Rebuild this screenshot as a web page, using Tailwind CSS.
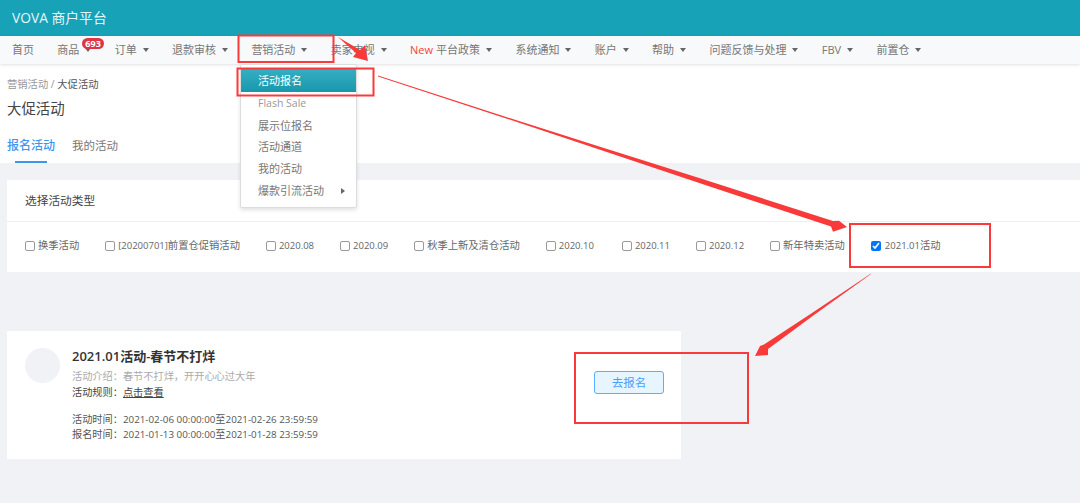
<!DOCTYPE html>
<html lang="zh-CN">
<head>
    <meta charset="UTF-8">
    <title>VOVA 商户平台</title>
    <script src="https://cdn.jsdelivr.net/npm/@tailwindcss/browser@4"></script>
</head>
<body class="relative h-[503px] w-[1080px] overflow-hidden bg-[#f0f2f5] font-['Open_Sans','Noto_Sans_CJK_SC',sans-serif] text-[#555]">

    <!-- top bar -->
    <header class="flex h-[36px] items-center bg-[#17a2b8] pl-[12px] text-[13.8px] text-[#e6f6f8]">VOVA 商户平台</header>

    <!-- nav -->
    <nav class="relative z-10 flex h-[28px] items-center gap-[23.35px] bg-[#f8f9fa] pl-[12px] text-[11px] text-[#777] shadow-[0_1px_3px_rgba(0,0,0,0.12)]">
        <span>首页</span>
        <span class="relative flex items-center">商品<i class="ml-[6px] h-0 w-0 border-x-[3.5px] border-t-[4px] border-x-transparent border-t-[#666]"></i>
            <b class="absolute left-[25px] top-[-4px] rounded-full bg-[#dc3545] px-[3px] text-[9px] font-bold leading-[11px] text-white">693</b>
        </span>
        <span class="flex items-center">订单<i class="ml-[6px] h-0 w-0 border-x-[3.5px] border-t-[4px] border-x-transparent border-t-[#666]"></i></span>
        <span class="flex items-center">退款审核<i class="ml-[6px] h-0 w-0 border-x-[3.5px] border-t-[4px] border-x-transparent border-t-[#666]"></i></span>
        <span class="flex items-center">营销活动<i class="ml-[6px] h-0 w-0 border-x-[3.5px] border-t-[4px] border-x-transparent border-t-[#666]"></i></span>
        <span class="flex items-center">卖家电视<i class="ml-[6px] h-0 w-0 border-x-[3.5px] border-t-[4px] border-x-transparent border-t-[#666]"></i></span>
        <span class="flex items-center"><em class="mr-[3px] not-italic text-[#ff3b3b]">New</em>平台政策<i class="ml-[6px] h-0 w-0 border-x-[3.5px] border-t-[4px] border-x-transparent border-t-[#666]"></i></span>
        <span class="flex items-center">系统通知<i class="ml-[6px] h-0 w-0 border-x-[3.5px] border-t-[4px] border-x-transparent border-t-[#666]"></i></span>
        <span class="flex items-center">账户<i class="ml-[6px] h-0 w-0 border-x-[3.5px] border-t-[4px] border-x-transparent border-t-[#666]"></i></span>
        <span class="flex items-center">帮助<i class="ml-[6px] h-0 w-0 border-x-[3.5px] border-t-[4px] border-x-transparent border-t-[#666]"></i></span>
        <span class="flex items-center">问题反馈与处理<i class="ml-[6px] h-0 w-0 border-x-[3.5px] border-t-[4px] border-x-transparent border-t-[#666]"></i></span>
        <span class="flex items-center">FBV<i class="ml-[6px] h-0 w-0 border-x-[3.5px] border-t-[4px] border-x-transparent border-t-[#666]"></i></span>
        <span class="flex items-center">前置仓<i class="ml-[6px] h-0 w-0 border-x-[3.5px] border-t-[4px] border-x-transparent border-t-[#666]"></i></span>
    </nav>

    <!-- page title -->
    <section class="h-[99px] bg-white px-[7px] pt-[13px]">
        <p class="text-[10.3px] leading-[15px] text-[#999]">营销活动 / <span class="text-[#555]">大促活动</span></p>
        <h1 class="mt-[7px] text-[14.4px] leading-[20px] text-[#444]">大促活动</h1>
        <div class="mt-[18px] flex gap-[17px] text-[11.5px] leading-[18px]">
            <span class="relative h-[26px] text-[12px] font-medium text-[#3c96f0]">报名活动<i class="absolute bottom-0 left-[8px] h-[2px] w-[32px] bg-[#3c96f0]"></i></span>
            <span class="text-[#777]">我的活动</span>
        </div>
    </section>

    <!-- activity types -->
    <section class="ml-[7px] mt-[17px] h-[92px] bg-white">
        <div class="flex h-[42px] items-center border-b border-[#eee] pl-[18px] text-[11.7px] text-[#444]">选择活动类型</div>
        <div class="flex h-[50px] items-center gap-[26px] pb-[2px] pl-[18px] text-[10.3px] text-[#666]">
            <label class="flex items-center gap-[3px]"><input type="checkbox" class="h-[10px] w-[10px] appearance-none rounded-[2px] border border-[#999] bg-white">换季活动</label>
            <label class="flex items-center gap-[3px]"><input type="checkbox" class="h-[10px] w-[10px] appearance-none rounded-[2px] border border-[#999] bg-white"><span><span class="text-[9.5px]">[20200701]</span>前置仓促销活动</span></label>
            <label class="flex items-center gap-[3px] text-[9.5px]"><input type="checkbox" class="h-[10px] w-[10px] appearance-none rounded-[2px] border border-[#999] bg-white">2020.08</label>
            <label class="flex items-center gap-[3px] text-[9.5px]"><input type="checkbox" class="h-[10px] w-[10px] appearance-none rounded-[2px] border border-[#999] bg-white">2020.09</label>
            <label class="flex items-center gap-[3px]"><input type="checkbox" class="h-[10px] w-[10px] appearance-none rounded-[2px] border border-[#999] bg-white">秋季上新及清仓活动</label>
            <label class="mr-[2px] flex items-center gap-[3px] text-[9.5px]"><input type="checkbox" class="h-[10px] w-[10px] appearance-none rounded-[2px] border border-[#999] bg-white">2020.10</label>
            <label class="flex items-center gap-[3px] text-[9.5px]"><input type="checkbox" class="h-[10px] w-[10px] appearance-none rounded-[2px] border border-[#999] bg-white">2020.11</label>
            <label class="flex items-center gap-[3px] text-[9.5px]"><input type="checkbox" class="h-[10px] w-[10px] appearance-none rounded-[2px] border border-[#999] bg-white">2020.12</label>
            <label class="flex items-center gap-[3px]"><input type="checkbox" class="h-[10px] w-[10px] appearance-none rounded-[2px] border border-[#999] bg-white">新年特卖活动</label>
            <label class="flex items-center gap-[4px]"><input type="checkbox" checked class="h-[10px] w-[10px] accent-[#0075ff]"><span><span class="text-[9.5px]">2021.01</span>活动</span></label>
        </div>
    </section>

    <!-- activity card -->
    <section class="ml-[7px] mt-[59px] flex h-[128px] w-[674px] bg-white pl-[18px] pt-[17px]">
        <div class="h-[35px] w-[35px] shrink-0 rounded-full bg-[#f0f2f5]"></div>
        <div class="ml-[12px] mt-[-1px] w-[522px] shrink-0">
            <h2 class="text-[13px] font-semibold leading-[18px] text-[#333]">2021.01活动-春节不打烊</h2>
            <p class="mt-[3px] text-[10.2px] leading-[16px] text-[#aaa]">活动介绍：春节不打烊，开开心心过大年</p>
            <p class="text-[10.2px] leading-[16px] text-[#444]">活动规则：<span class="underline">点击查看</span></p>
            <p class="mt-[12px] text-[10.2px] leading-[15px] text-[#555]">活动时间：<span class="text-[9.8px]">2021-02-06 00:00:00</span>至<span class="text-[9.8px]">2021-02-26 23:59:59</span></p>
            <p class="text-[10.2px] leading-[15px] text-[#555]">报名时间：<span class="text-[9.8px]">2021-01-13 00:00:00</span>至<span class="text-[9.8px]">2021-01-28 23:59:59</span></p>
        </div>
        <button class="mt-[23px] h-[23px] w-[70px] shrink-0 rounded-[3px] border border-[#5aaeff] bg-[#e6f5ff] text-[11.5px] text-[#4a9eff]">去报名</button>
    </section>

    <!-- dropdown -->
    <div class="absolute left-[240px] top-[64px] z-20 h-[144px] w-[117px] rounded-[2px] border border-[#ddd] bg-white pt-[4px] text-[11px] leading-[21.7px] text-[#777] shadow-[0_2px_4px_rgba(0,0,0,0.12)]">
        <div class="mb-[1px] h-[23px] bg-gradient-to-b from-[#35aec2] to-[#1797ac] pl-[17px] pt-[1px] text-white">活动报名</div>
        <div class="pl-[17px] text-[10.5px] text-[#999]">Flash Sale</div>
        <div class="pl-[17px]">展示位报名</div>
        <div class="pl-[17px]">活动通道</div>
        <div class="pl-[17px]">我的活动</div>
        <div class="flex items-center pl-[17px]">爆款引流活动<i class="ml-[17px] h-0 w-0 border-y-[3.5px] border-l-[4px] border-y-transparent border-l-[#666]"></i></div>
    </div>

    <!-- red annotations -->
    <svg class="absolute left-0 top-0 z-30" width="1080" height="503" viewBox="0 0 1080 503" fill="none">
        <g stroke="#f93a3a" stroke-width="2">
            <rect x="238.5" y="35.5" width="95" height="26.5"/>
            <rect x="237.5" y="68.5" width="136" height="27"/>
            <rect x="850" y="224" width="140" height="43"/>
            <rect x="575" y="353" width="173" height="70"/>
        </g>
        <g fill="#f93a3a">
            <polygon points="338,37 360,50 365,45 368,61 353,57 356,53"/>
            <polygon points="378,75.6 500,115 600,146.8 700,178.3 833,221 839,220.7 847,227 833,231.7 831,226.5 700,183.3 600,149.8 500,116.4 378,76.4"/>
            <polygon points="871,273.5 812,313 764,344.5 760,346 755,356 768,355 768,349 814,315 871,274"/>
        </g>
    </svg>
</body>
</html>
